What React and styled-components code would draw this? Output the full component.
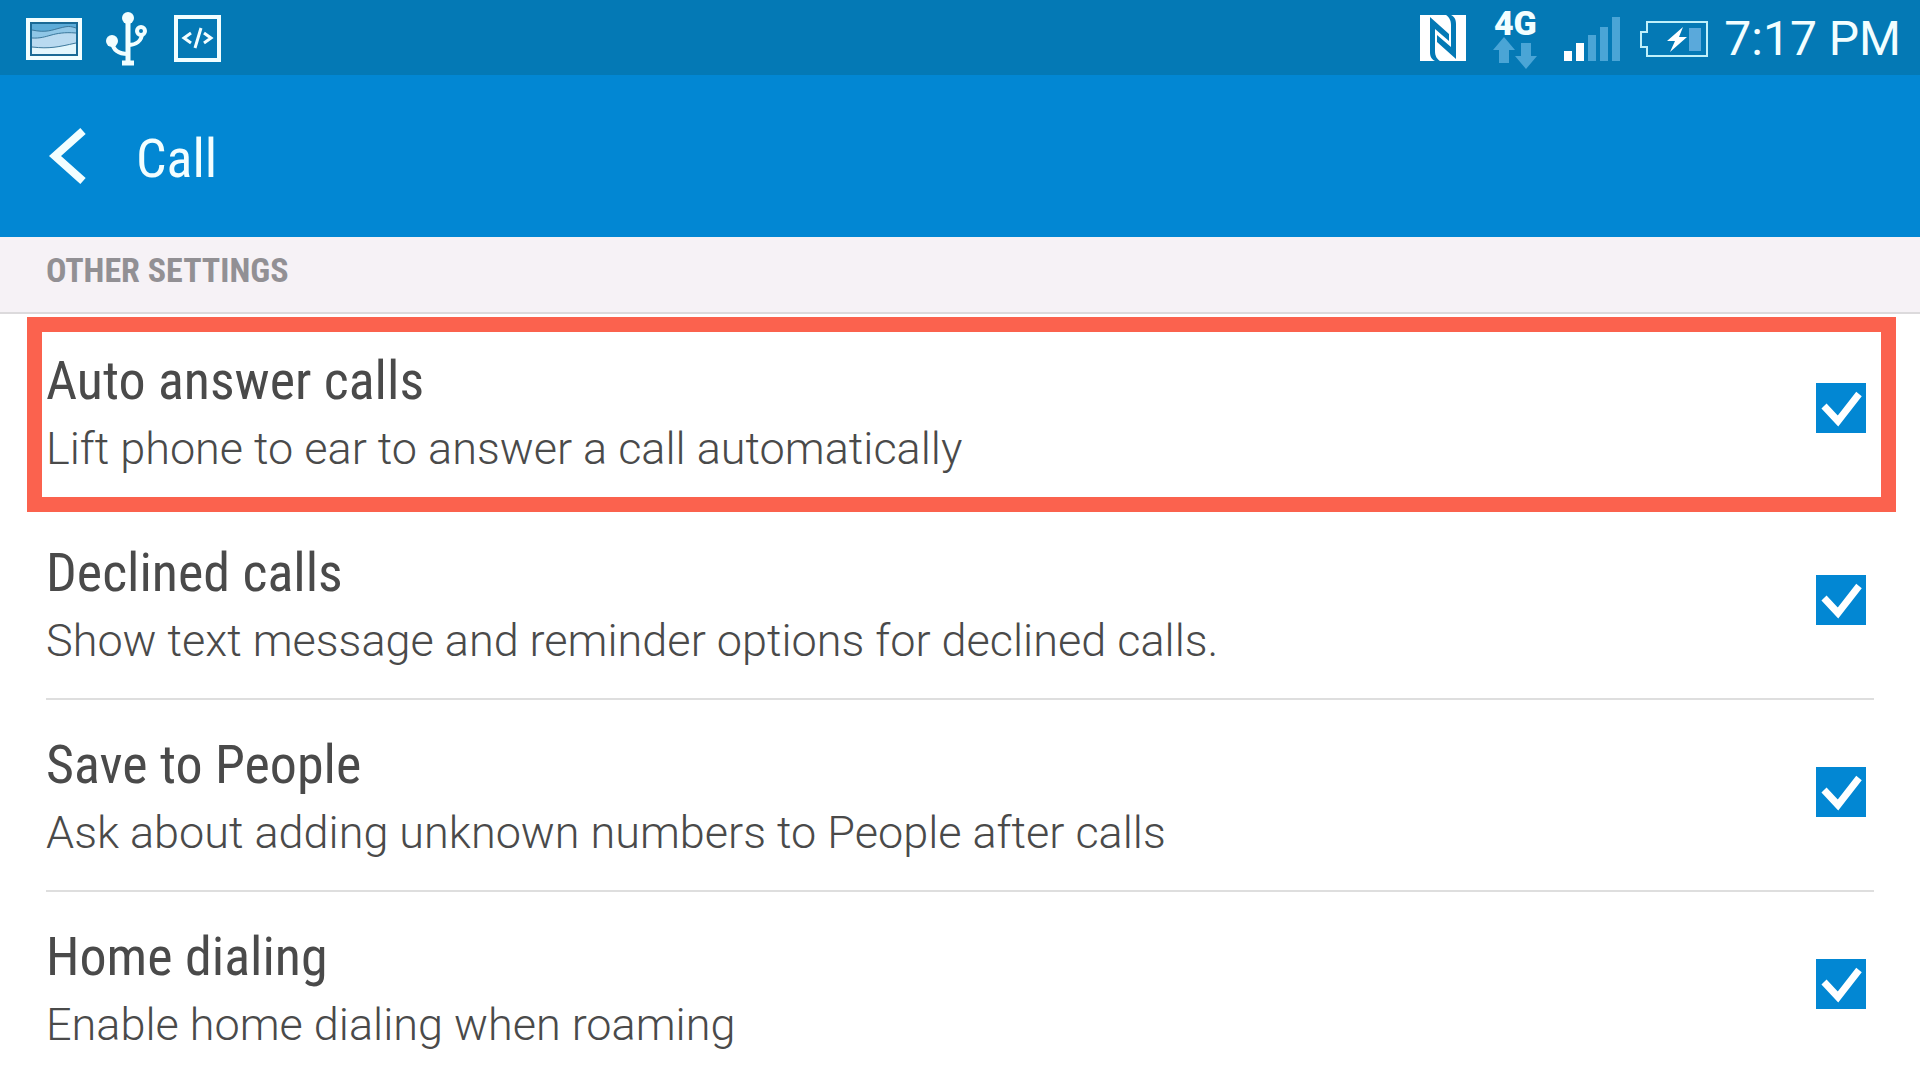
import React from "react";
import styled, { createGlobalStyle } from "styled-components";

const GlobalStyle = createGlobalStyle`
  *, *::before, *::after { box-sizing: border-box; }
  body { margin: 0; background: #fff; overflow: hidden; font-family: Roboto, "Open Sans", sans-serif; color: #4a4a4a; }
`;

const condensed = `"Roboto Condensed", Roboto, sans-serif`;

const StatusBar = styled.div`
  display: flex;
  align-items: center;
  justify-content: space-between;
  height: 75px;
  padding: 2px 19px 0 26px;
  background: #0479b5;
  color: #f2feff;
`;

const StatusGroup = styled.div`
  display: flex;
  align-items: center;
  gap: ${(p) => p.$gap}px;
`;

const StatusIcon = styled.svg`
  display: block;
  flex: none;
`;

const Network = styled.div`
  display: flex;
  flex-direction: column;
  align-items: center;
  width: 44px;
`;

const NetworkLabel = styled.span`
  font: 900 34px/28px Roboto, sans-serif;
`;

const Clock = styled.time`
  font-size: 48px;
  line-height: 56px;
  white-space: nowrap;
`;

const AppBar = styled.header`
  display: flex;
  align-items: center;
  gap: 46px;
  height: 162px;
  padding: 0 46px;
  background: #0287d3;
  color: #f2feff;
`;

const BackButton = styled.button`
  display: flex;
  padding: 0;
  border: 0;
  background: none;
  color: inherit;
  cursor: pointer;
`;

const PageTitle = styled.h1`
  margin: 0;
  padding-top: 6px;
  font: 400 54px/64px ${condensed};
`;

const SectionTitle = styled.h2`
  margin: 0;
  padding: 11px 46px 20px;
  border-bottom: 2px solid #dcdadc;
  background: #f6f2f6;
  color: #929094;
  font: 700 34px/44px ${condensed};
`;

const List = styled.ul`
  margin: 0;
  padding: 2px 46px 0;
  list-style: none;
`;

const Row = styled.li`
  position: relative;
  border-bottom: 2px solid #dedede;
`;

const RowLabel = styled.label`
  display: flex;
  justify-content: space-between;
  padding: 33px 8px 29px 0;
  cursor: pointer;
`;

const Title = styled.span`
  display: block;
  font: 400 54px/64px ${condensed};
`;

const Detail = styled.span`
  display: block;
  margin-top: 8px;
  font-size: 45px;
  font-weight: 300;
  line-height: 56px;
`;

const Tick = styled.span`
  display: grid;
  flex: none;
  width: 50px;
  height: 50px;
  margin-top: 34px;
  > * { grid-area: 1 / 1; }
`;

const TickInput = styled.input`
  appearance: none;
  width: 50px;
  height: 50px;
  margin: 0;
  border: 2px solid #0287d3;
  &:checked { background: #0287d3; }
  &:not(:checked) + svg { visibility: hidden; }
`;

const TickMark = styled.svg`
  pointer-events: none;
`;

const Highlight = styled.div`
  position: absolute;
  inset: 1px -22px -6px -19px;
  border: 15px solid #fb624e;
  pointer-events: none;
`;

const settings = [
  { id: "auto-answer", title: "Auto answer calls", detail: "Lift phone to ear to answer a call automatically", highlighted: true },
  { id: "declined", title: "Declined calls", detail: "Show text message and reminder options for declined calls." },
  { id: "save-people", title: "Save to People", detail: "Ask about adding unknown numbers to People after calls" },
  { id: "home-dialing", title: "Home dialing", detail: "Enable home dialing when roaming" },
];

function PictureIcon() {
  return (
    <StatusIcon width="56" height="42" viewBox="0 0 56 42" aria-hidden="true">
      <rect x="2" y="2" width="52" height="38" fill="#0b6c9f" stroke="#f2feff" strokeWidth="4" />
      <rect x="6" y="6" width="44" height="30" fill="#5cacd8" />
      <path d="M6 12c14 3 20 0 28-2s10-2 16 0v26H6z" fill="#8fc6e6" />
      <path d="M6 20c16 1 20-7 44-5v21H6z" fill="#b9daf0" />
      <path d="M6 29c18 2 26 0 44-4v11H6z" fill="#e2f6fd" />
      <path d="M6 12c14 3 20 0 28-2s10-2 16 0M6 20c16 1 20-7 44-5M6 29c18 2 26 0 44-4" fill="none" stroke="#3b789c" />
      <rect x="5" y="5" width="46" height="32" fill="none" stroke="#1a6a96" strokeWidth="2" />
    </StatusIcon>
  );
}

function UsbIcon() {
  return (
    <StatusIcon width="44" height="54" viewBox="0 0 44 54" fill="none" stroke="#f2feff" aria-hidden="true">
      <path d="M22 7v42" strokeWidth="5" />
      <path d="M6 30c1 8 7 12 16 12M22 33c8 0 14-4 14-12" strokeWidth="4" />
      <circle cx="22" cy="6" r="6" fill="#f2feff" stroke="none" />
      <circle cx="6" cy="29" r="6" fill="#f2feff" stroke="none" />
      <circle cx="35" cy="19" r="4" strokeWidth="4" />
      <path d="M16 51h12" strokeWidth="5" />
    </StatusIcon>
  );
}

function CodeIcon() {
  return (
    <StatusIcon width="47" height="47" viewBox="0 0 47 47" fill="none" stroke="#f2feff" aria-hidden="true">
      <rect x="2" y="2" width="43" height="43" strokeWidth="4" />
      <path d="M17 18l-7 5 7 5M30 18l7 5-7 5M27 13l-6 20" strokeWidth="3" />
    </StatusIcon>
  );
}

function NfcIcon() {
  return (
    <StatusIcon width="46" height="48" viewBox="0 0 46 48" aria-hidden="true">
      <path d="M0 0h46v46H0z" fill="#fff" />
      <path
        d="M10 2L29 19V26L15 14V36c0 5 2 8 5 10h-5c-4-2-5-5-5-9zM36 44L17 27V20L31 32V10c0-5-2-8-5-10h5c4 2 5 5 5 9z"
        fill="#0479b5"
      />
    </StatusIcon>
  );
}

function DataArrows() {
  return (
    <StatusIcon width="44" height="32" viewBox="0 0 44 32" fill="#4aa5d6" aria-hidden="true">
      <path d="M11 0l11 13h-6v13H6V13H0zM33 32L22 19h6V6h10v13h6z" />
    </StatusIcon>
  );
}

function SignalIcon() {
  return (
    <StatusIcon width="56" height="44" viewBox="0 0 56 44" fill="#4aa5d6" aria-hidden="true">
      <path d="M0 34h8v10H0zM12 26h8v18h-8z" fill="#fff" />
      <path d="M24 18h8v26h-8zM36 10h8v34h-8zM48 0h8v44h-8z" />
    </StatusIcon>
  );
}

function BatteryIcon() {
  return (
    <StatusIcon width="68" height="36" viewBox="0 0 68 36" aria-hidden="true">
      <path d="M7 1h60v34H7v-9H1V11h6z" fill="none" stroke="#bff0fa" strokeWidth="2" />
      <path d="M49 7h12v23H49z" fill="#5aa9db" />
      <path d="M43 6L27 20h8l-5 11 17-15h-8z" fill="#fff" />
    </StatusIcon>
  );
}

function SettingRow({ setting }) {
  return (
    <Row>
      <RowLabel htmlFor={setting.id}>
        <span>
          <Title>{setting.title}</Title>
          <Detail>{setting.detail}</Detail>
        </span>
        <Tick>
          <TickInput id={setting.id} type="checkbox" defaultChecked />
          <TickMark width="50" height="50" viewBox="0 0 50 50" aria-hidden="true">
            <path d="M8 23l14 15 21-27" fill="none" stroke="#fff" strokeWidth="7" />
          </TickMark>
        </Tick>
      </RowLabel>
      {setting.highlighted && <Highlight />}
    </Row>
  );
}

export default function App() {
  return (
    <>
      <GlobalStyle />
      <StatusBar>
        <StatusGroup $gap={24}>
          <PictureIcon />
          <UsbIcon />
          <CodeIcon />
        </StatusGroup>
        <StatusGroup $gap={16}>
          <StatusGroup $gap={27}>
            <NfcIcon />
            <Network>
              <NetworkLabel>4G</NetworkLabel>
              <DataArrows />
            </Network>
            <StatusGroup $gap={20}>
              <SignalIcon />
              <BatteryIcon />
            </StatusGroup>
          </StatusGroup>
          <Clock>7:17 PM</Clock>
        </StatusGroup>
      </StatusBar>
      <AppBar>
        <BackButton type="button" aria-label="Back">
          <svg width="44" height="58" viewBox="0 0 44 58" aria-hidden="true">
            <path d="M37 4L9 29l28 25" fill="none" stroke="#f2feff" strokeWidth="8" />
          </svg>
        </BackButton>
        <PageTitle>Call</PageTitle>
      </AppBar>
      <main>
        <SectionTitle>OTHER SETTINGS</SectionTitle>
        <List>
          {settings.map((s) => (
            <SettingRow key={s.id} setting={s} />
          ))}
        </List>
      </main>
    </>
  );
}
